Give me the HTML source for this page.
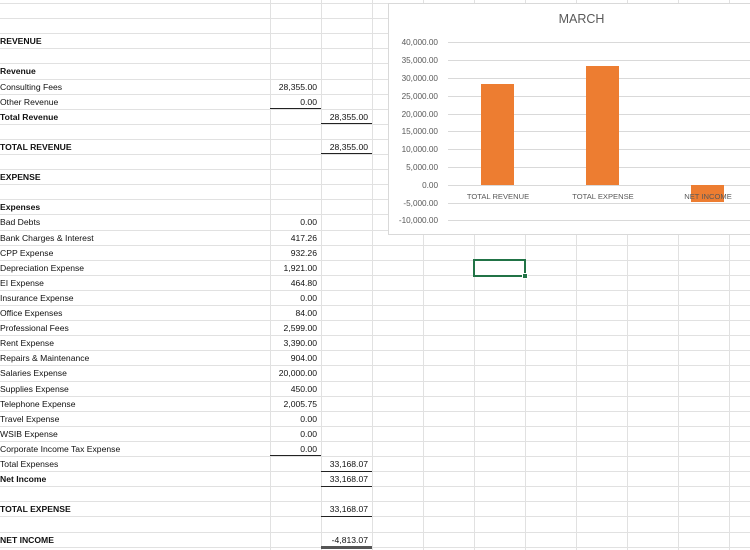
<!DOCTYPE html>
<html><head><meta charset="utf-8"><style>
body{margin:0;width:750px;height:550px;overflow:hidden;background:#fff;font-family:"Liberation Sans",Arial,sans-serif;position:relative}
.h{position:absolute;left:0;width:750px;height:1px;background:#e1e1e1}
.v{position:absolute;top:0;width:1px;height:550px;background:#e1e1e1}
.t{position:absolute;font-size:8.6px;color:#111;line-height:15px;white-space:nowrap}
.b{font-weight:bold}
.a{left:0}
.cb{left:272px;width:45px;text-align:right}
.cc{left:323px;width:45px;text-align:right}
.ub{position:absolute;left:270px;width:51px;height:1px;background:#222}
.uc{position:absolute;left:321px;width:51px;height:1px;background:#222}
#chart{position:absolute;left:388px;top:3px;width:370px;height:230px;background:#fff;border:1px solid #d9d9d9}
.gl{position:absolute;left:59px;width:320px;height:1px;background:#d9d9d9}
.yl{position:absolute;left:0;width:49px;text-align:right;font-size:8.2px;color:#595959;line-height:10px}
.bar{position:absolute;background:#ed7d31;width:33px}
.cl{position:absolute;font-size:7.6px;color:#595959;width:90px;text-align:center;top:188px}
</style></head><body>
<div class="h" style="top:3px"></div><div class="h" style="top:18px"></div><div class="h" style="top:33px"></div><div class="h" style="top:48px"></div><div class="h" style="top:63px"></div><div class="h" style="top:79px"></div><div class="h" style="top:94px"></div><div class="h" style="top:109px"></div><div class="h" style="top:124px"></div><div class="h" style="top:139px"></div><div class="h" style="top:154px"></div><div class="h" style="top:169px"></div><div class="h" style="top:184px"></div><div class="h" style="top:199px"></div><div class="h" style="top:214px"></div><div class="h" style="top:230px"></div><div class="h" style="top:245px"></div><div class="h" style="top:260px"></div><div class="h" style="top:275px"></div><div class="h" style="top:290px"></div><div class="h" style="top:305px"></div><div class="h" style="top:320px"></div><div class="h" style="top:335px"></div><div class="h" style="top:350px"></div><div class="h" style="top:365px"></div><div class="h" style="top:381px"></div><div class="h" style="top:396px"></div><div class="h" style="top:411px"></div><div class="h" style="top:426px"></div><div class="h" style="top:441px"></div><div class="h" style="top:456px"></div><div class="h" style="top:471px"></div><div class="h" style="top:486px"></div><div class="h" style="top:501px"></div><div class="h" style="top:516px"></div><div class="h" style="top:532px"></div><div class="h" style="top:547px"></div>
<div class="v" style="left:270px"></div><div class="v" style="left:321px"></div><div class="v" style="left:372px"></div><div class="v" style="left:423px"></div><div class="v" style="left:474px"></div><div class="v" style="left:525px"></div><div class="v" style="left:576px"></div><div class="v" style="left:627px"></div><div class="v" style="left:678px"></div><div class="v" style="left:729px"></div>

<div class="t a b" style="top:34px">REVENUE</div>
<div class="t a b" style="top:64px">Revenue</div>
<div class="t a" style="top:80px">Consulting Fees</div><div class="t cb" style="top:80px">28,355.00</div>
<div class="t a" style="top:95px">Other Revenue</div><div class="t cb" style="top:95px">0.00</div><div class="ub" style="top:108px"></div>
<div class="t a b" style="top:110px">Total Revenue</div><div class="t cc" style="top:110px">28,355.00</div><div class="uc" style="top:123px"></div>
<div class="t a b" style="top:140px">TOTAL REVENUE</div><div class="t cc" style="top:140px">28,355.00</div><div class="uc" style="top:153px"></div>
<div class="t a b" style="top:170px">EXPENSE</div>
<div class="t a b" style="top:200px">Expenses</div>
<div class="t a" style="top:215px">Bad Debts</div><div class="t cb" style="top:215px">0.00</div>
<div class="t a" style="top:231px">Bank Charges &amp; Interest</div><div class="t cb" style="top:231px">417.26</div>
<div class="t a" style="top:246px">CPP Expense</div><div class="t cb" style="top:246px">932.26</div>
<div class="t a" style="top:261px">Depreciation Expense</div><div class="t cb" style="top:261px">1,921.00</div>
<div class="t a" style="top:276px">EI Expense</div><div class="t cb" style="top:276px">464.80</div>
<div class="t a" style="top:291px">Insurance Expense</div><div class="t cb" style="top:291px">0.00</div>
<div class="t a" style="top:306px">Office Expenses</div><div class="t cb" style="top:306px">84.00</div>
<div class="t a" style="top:321px">Professional Fees</div><div class="t cb" style="top:321px">2,599.00</div>
<div class="t a" style="top:336px">Rent Expense</div><div class="t cb" style="top:336px">3,390.00</div>
<div class="t a" style="top:351px">Repairs &amp; Maintenance</div><div class="t cb" style="top:351px">904.00</div>
<div class="t a" style="top:366px">Salaries Expense</div><div class="t cb" style="top:366px">20,000.00</div>
<div class="t a" style="top:382px">Supplies Expense</div><div class="t cb" style="top:382px">450.00</div>
<div class="t a" style="top:397px">Telephone Expense</div><div class="t cb" style="top:397px">2,005.75</div>
<div class="t a" style="top:412px">Travel Expense</div><div class="t cb" style="top:412px">0.00</div>
<div class="t a" style="top:427px">WSIB Expense</div><div class="t cb" style="top:427px">0.00</div>
<div class="t a" style="top:442px">Corporate Income Tax Expense</div><div class="t cb" style="top:442px">0.00</div><div class="ub" style="top:455px"></div>
<div class="t a" style="top:457px">Total Expenses</div><div class="t cc" style="top:457px">33,168.07</div><div class="uc" style="top:471px"></div>
<div class="t a b" style="top:472px">Net Income</div><div class="t cc" style="top:472px">33,168.07</div><div class="uc" style="top:486px"></div>
<div class="t a b" style="top:502px">TOTAL EXPENSE</div><div class="t cc" style="top:502px">33,168.07</div><div class="uc" style="top:516px"></div>
<div class="t a b" style="top:533px">NET INCOME</div><div class="t cc" style="top:533px">-4,813.07</div><div class="uc" style="top:546px;height:3px;background:#555"></div>

<div style="position:absolute;left:473px;top:259px;width:50px;height:15px;border:2px solid #217346;box-sizing:content-box;width:49px;height:14px;left:473px"></div>
<div style="position:absolute;left:522px;top:273px;width:4px;height:4px;background:#217346;border:1px solid #fff"></div>

<div id="chart">
<div style="position:absolute;left:0;width:385px;top:8px;text-align:center;font-size:12.5px;color:#595959">MARCH</div>
<div class="gl" style="top:38px"></div><div class="yl" style="top:34px">40,000.00</div>
<div class="gl" style="top:56px"></div><div class="yl" style="top:52px">35,000.00</div>
<div class="gl" style="top:74px"></div><div class="yl" style="top:70px">30,000.00</div>
<div class="gl" style="top:92px"></div><div class="yl" style="top:88px">25,000.00</div>
<div class="gl" style="top:110px"></div><div class="yl" style="top:106px">20,000.00</div>
<div class="gl" style="top:127px"></div><div class="yl" style="top:123px">15,000.00</div>
<div class="gl" style="top:145px"></div><div class="yl" style="top:141px">10,000.00</div>
<div class="gl" style="top:163px"></div><div class="yl" style="top:159px">5,000.00</div>
<div class="gl" style="top:181px"></div><div class="yl" style="top:177px">0.00</div>
<div class="gl" style="top:199px"></div><div class="yl" style="top:195px">-5,000.00</div>
<div class="gl" style="top:216px"></div><div class="yl" style="top:212px">-10,000.00</div>
<div class="bar" style="left:92px;top:80px;height:101px"></div>
<div class="bar" style="left:197px;top:62px;height:119px"></div>
<div class="bar" style="left:302px;top:181px;height:17px"></div>
<div class="cl" style="left:64px">TOTAL REVENUE</div>
<div class="cl" style="left:169px">TOTAL EXPENSE</div>
<div class="cl" style="left:274px">NET INCOME</div>
</div>
</body></html>
